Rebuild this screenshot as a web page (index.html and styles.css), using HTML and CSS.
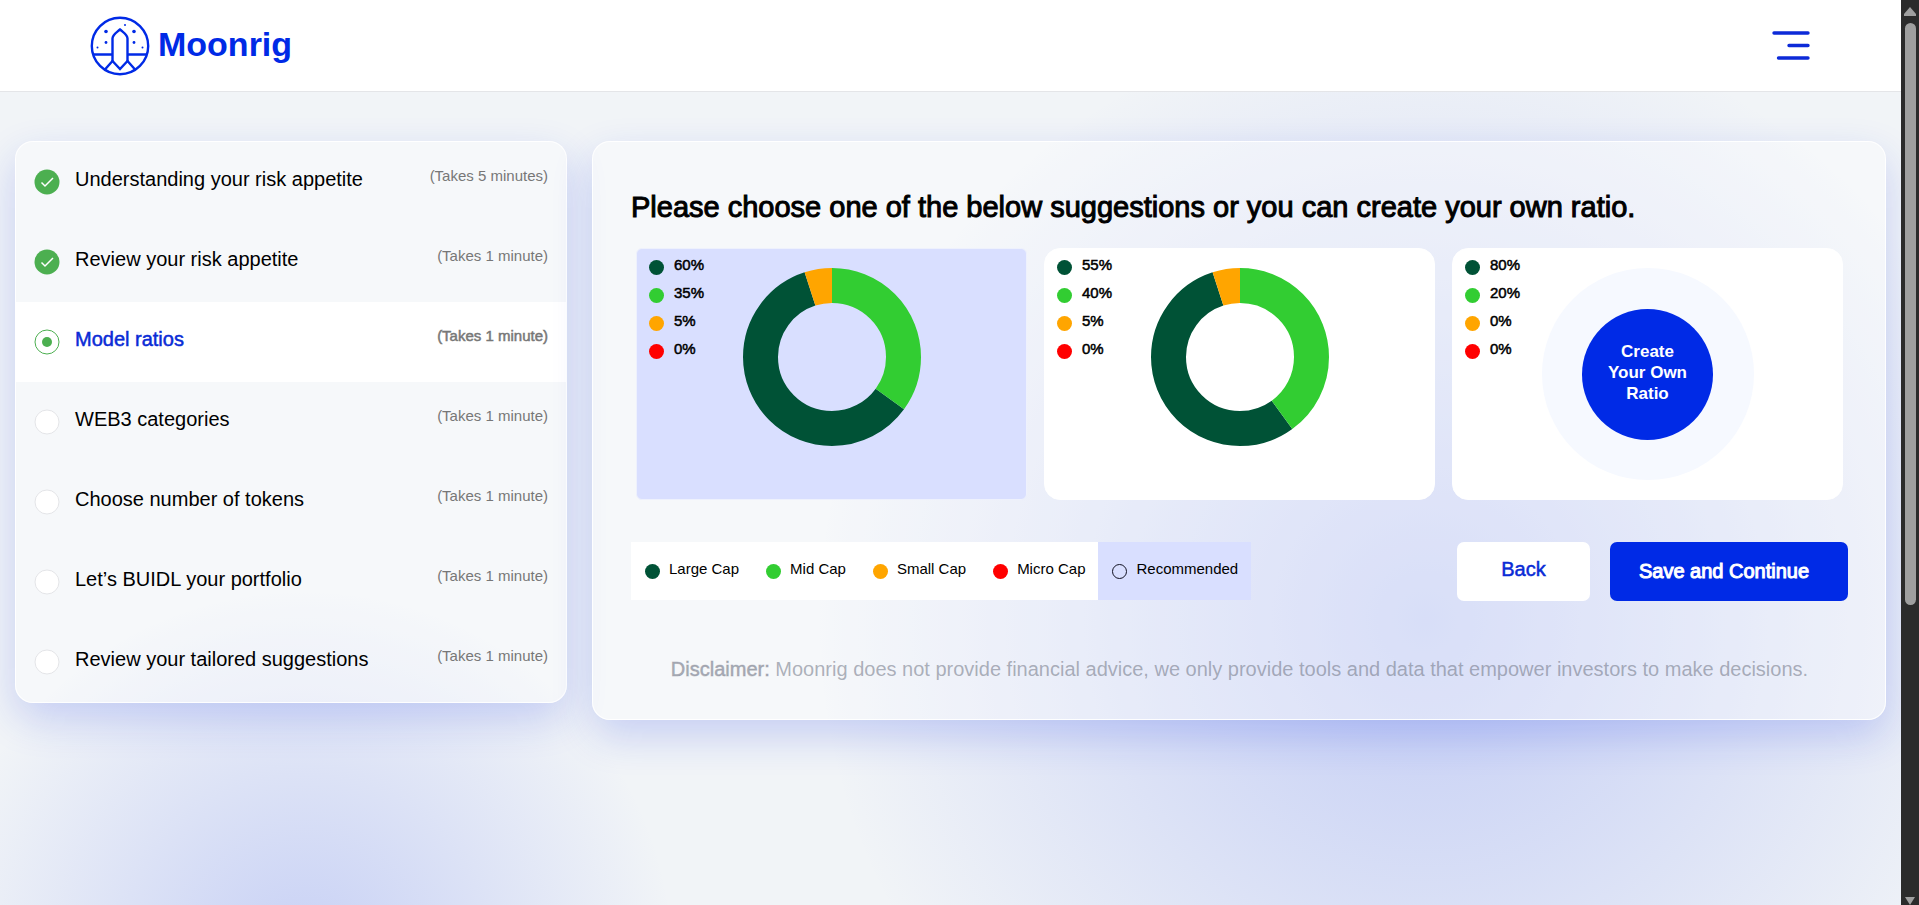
FILE: index.html
```
<!DOCTYPE html>
<html lang="en">
  <head>
    <meta charset="utf-8" />
    <title>Moonrig</title>
    <link rel="stylesheet" href="styles.css" />
  </head>
  <body>
    <div class="page">
      <header class="header">
        <a class="logo" href="#">
          <svg width="60" height="60" viewBox="0 0 60 60" fill="none" stroke="#002ae6" stroke-width="2.4">
            <circle cx="30" cy="30" r="28.2" />
            <path d="M3 38.500H22.500M37.500 38.500H57" />
            <path d="M22.500 46V22.500C22.500 19 26 17 30 13.500C34 17 37.500 19 37.500 22.500V46" />
            <path d="M14.500 54L22.500 45L30 53L37.500 45L45.500 54" />
            <g fill="#002ae6" stroke="none">
              <circle cx="16" cy="15.500" r="1.800" />
              <circle cx="44" cy="15.500" r="1.800" />
              <circle cx="35" cy="9" r="1" />
              <circle cx="16" cy="26.500" r="1.400" />
              <circle cx="44" cy="26.500" r="1.400" />
              <circle cx="7.500" cy="31.500" r="1" />
              <circle cx="52.500" cy="31.500" r="1" />
            </g>
          </svg>
          <span>Moonrig</span>
        </a>
        <button class="menu" aria-label="Menu">
          <svg width="38" height="30" viewBox="0 0 38 30" stroke="#0c2ad8" stroke-width="3.4" stroke-linecap="round">
            <path d="M2 2H36M17 14.500H36M6.500 27H36" />
          </svg>
        </button>
      </header>

      <main class="content">
        <ul class="panel steps">
          <li class="step">
            <svg class="mark" viewBox="0 0 26 26"><circle cx="13" cy="13" r="12.500" fill="#4caf50" /><path d="M7.500 13.500L11 17L19 9" fill="none" stroke="#fff" stroke-width="1.500" /></svg>
            <a href="#">Understanding your risk appetite</a>
            <span class="time">(Takes 5 minutes)</span>
          </li>
          <li class="step">
            <svg class="mark" viewBox="0 0 26 26"><circle cx="13" cy="13" r="12.500" fill="#4caf50" /><path d="M7.500 13.500L11 17L19 9" fill="none" stroke="#fff" stroke-width="1.500" /></svg>
            <a href="#">Review your risk appetite</a>
            <span class="time">(Takes 1 minute)</span>
          </li>
          <li class="step active">
            <svg class="mark" viewBox="0 0 26 26"><circle cx="13" cy="13" r="12" fill="#fff" stroke="#4caf50" /><circle cx="13" cy="13" r="5" fill="#4caf50" /></svg>
            <a href="#">Model ratios</a>
            <span class="time">(Takes 1 minute)</span>
          </li>
          <li class="step">
            <svg class="mark" viewBox="0 0 26 26"><circle cx="13" cy="13" r="12" fill="#fff" stroke="#e4e5e8" /></svg>
            <a href="#">WEB3 categories</a>
            <span class="time">(Takes 1 minute)</span>
          </li>
          <li class="step">
            <svg class="mark" viewBox="0 0 26 26"><circle cx="13" cy="13" r="12" fill="#fff" stroke="#e4e5e8" /></svg>
            <a href="#">Choose number of tokens</a>
            <span class="time">(Takes 1 minute)</span>
          </li>
          <li class="step">
            <svg class="mark" viewBox="0 0 26 26"><circle cx="13" cy="13" r="12" fill="#fff" stroke="#e4e5e8" /></svg>
            <a href="#">Let’s BUIDL your portfolio</a>
            <span class="time">(Takes 1 minute)</span>
          </li>
          <li class="step">
            <svg class="mark" viewBox="0 0 26 26"><circle cx="13" cy="13" r="12" fill="#fff" stroke="#e4e5e8" /></svg>
            <a href="#">Review your tailored suggestions</a>
            <span class="time">(Takes 1 minute)</span>
          </li>
        </ul>

        <section class="panel ratios">
          <h1>Please choose one of the below suggestions or you can create your own ratio.</h1>

          <div class="cards">
            <div class="card selected">
              <ul class="values">
                <li><i class="dot large"></i>60%</li>
                <li><i class="dot mid"></i>35%</li>
                <li><i class="dot small"></i>5%</li>
                <li><i class="dot micro"></i>0%</li>
              </ul>
              <svg class="donut" viewBox="0 0 180 180" fill="none" stroke-width="35">
                <circle cx="90" cy="90" r="71.500" pathLength="100" stroke="#005236" stroke-dasharray="60 40" stroke-dashoffset="-35" />
                <circle cx="90" cy="90" r="71.500" pathLength="100" stroke="#32cd32" stroke-dasharray="35 65" />
                <circle cx="90" cy="90" r="71.500" pathLength="100" stroke="#ffa500" stroke-dasharray="5 95" stroke-dashoffset="5" />
              </svg>
            </div>
            <div class="card">
              <ul class="values">
                <li><i class="dot large"></i>55%</li>
                <li><i class="dot mid"></i>40%</li>
                <li><i class="dot small"></i>5%</li>
                <li><i class="dot micro"></i>0%</li>
              </ul>
              <svg class="donut" viewBox="0 0 180 180" fill="none" stroke-width="35">
                <circle cx="90" cy="90" r="71.500" pathLength="100" stroke="#005236" stroke-dasharray="55 45" stroke-dashoffset="-40" />
                <circle cx="90" cy="90" r="71.500" pathLength="100" stroke="#32cd32" stroke-dasharray="40 60" />
                <circle cx="90" cy="90" r="71.500" pathLength="100" stroke="#ffa500" stroke-dasharray="5 95" stroke-dashoffset="5" />
              </svg>
            </div>
            <div class="card">
              <ul class="values">
                <li><i class="dot large"></i>80%</li>
                <li><i class="dot mid"></i>20%</li>
                <li><i class="dot small"></i>0%</li>
                <li><i class="dot micro"></i>0%</li>
              </ul>
              <div class="halo">
                <button class="create">Create<br />Your Own<br />Ratio</button>
              </div>
            </div>
          </div>

          <div class="bottom">
            <ul class="legend">
              <li><i class="dot large"></i>Large Cap</li>
              <li><i class="dot mid"></i>Mid Cap</li>
              <li><i class="dot small"></i>Small Cap</li>
              <li><i class="dot micro"></i>Micro Cap</li>
              <li class="recommended"><i class="dot ring"></i>Recommended</li>
            </ul>
            <div class="actions">
              <button class="btn back">Back</button>
              <button class="btn save">Save and Continue</button>
            </div>
          </div>

          <p class="disclaimer">
            <b>Disclaimer:</b> Moonrig does not provide financial advice, we only provide tools and data that empower investors to make decisions.
          </p>
        </section>
      </main>
    </div>

    <div class="scrollbar">
      <svg width="12" height="9" viewBox="0 0 12 9"><path d="M6 0L12 7V9H0V7Z" fill="#9f9f9f" /></svg>
      <div class="thumb"></div>
      <svg width="12" height="8" viewBox="0 0 12 8"><path d="M1 0H11L6 8Z" fill="#9f9f9f" /></svg>
    </div>
  </body>
</html>
```
FILE: styles.css
```
* {
  box-sizing: border-box;
}

body {
  display: flex;
  height: 100vh;
  margin: 0;
  overflow: hidden;
  font-family: "Liberation Sans", Arial, sans-serif;
  color: #000;
}

ul {
  list-style: none;
  margin: 0;
  padding: 0;
}

a {
  color: inherit;
  text-decoration: none;
}

button {
  font-family: inherit;
  border: 0;
  cursor: pointer;
}

.page {
  flex: 1;
  background:
    radial-gradient(circle at 75% 620px, rgba(90, 115, 240, 0.3), rgba(90, 115, 240, 0) 610px),
    radial-gradient(circle at 16% 960px, rgba(90, 115, 240, 0.28), rgba(90, 115, 240, 0) 370px),
    #f1f4f7;
}

.header {
  display: flex;
  justify-content: space-between;
  align-items: center;
  height: 92px;
  padding: 0 91px 0 90px;
  background: #fff;
  border-bottom: 1px solid #e4e5e8;
}

.logo {
  display: flex;
  align-items: center;
  gap: 8px;
  color: #002ae6;
  font-size: 34px;
  font-weight: bold;
}

.logo span {
  padding-bottom: 3px;
}

.menu {
  display: flex;
  padding: 0;
  background: none;
}

.content {
  display: grid;
  grid-template-columns: 552px 1fr;
  align-items: start;
  gap: 25px;
  padding: 49px 15px;
}

.panel {
  border: 1px solid rgba(255, 255, 255, 0.9);
  border-radius: 18px;
  background: rgba(255, 255, 255, 0.35);
  box-shadow: 0 16px 40px rgba(31, 60, 230, 0.2);
}

.step {
  display: flex;
  align-items: flex-start;
  height: 80px;
  padding: 25px 18px 0 18px;
  font-size: 20px;
  line-height: 24px;
}

.step a {
  margin-left: 15px;
}

.step.active {
  background: #fff;
}

.step.active a {
  color: #0a2bd6;
  -webkit-text-stroke: 0.5px #0a2bd6;
}

.step.active .time {
  -webkit-text-stroke: 0.5px #777;
}

.mark {
  width: 26px;
  height: 26px;
  margin-top: 2px;
}

.time {
  margin-left: auto;
  color: #777;
  font-size: 15px;
  line-height: 18px;
}

.ratios {
  padding: 47px 37px 38px 38px;
}

.ratios h1 {
  margin: 0 0 23px;
  font-size: 29px;
  line-height: 36px;
  font-weight: normal;
  -webkit-text-stroke: 1px #000;
}

.cards {
  display: grid;
  grid-template-columns: repeat(3, 1fr);
  gap: 17px;
  padding: 0 5px;
}

.card {
  display: grid;
  grid-template-columns: 1fr auto 1fr;
  align-items: start;
  height: 252px;
  border: 1px solid #fff;
  border-radius: 16px;
  background: #fff;
}

.card.selected {
  border-color: #eef1fd;
  border-radius: 6px;
  background: #d9dfff;
}

.values {
  padding: 2px 0 0 12px;
  font-size: 15px;
  line-height: 28px;
  -webkit-text-stroke: 0.5px #000;
}

.values li {
  display: flex;
  align-items: center;
  gap: 10px;
}

.dot {
  width: 15px;
  height: 15px;
  margin-top: 4px;
  border-radius: 50%;
}

.large {
  background: #005236;
}

.mid {
  background: #32cd32;
}

.small {
  background: #ffa500;
}

.micro {
  background: #f00;
}

.ring {
  border: 1px solid #112;
}

.donut {
  width: 180px;
  height: 180px;
  margin-top: 18px;
  transform: rotate(-90deg);
}

.halo {
  display: flex;
  justify-content: center;
  align-items: center;
  width: 212px;
  height: 212px;
  margin-top: 19px;
  border-radius: 50%;
  background: #f6f9ff;
}

.create {
  width: 131px;
  height: 131px;
  padding: 0 0 3px;
  border-radius: 50%;
  background: #002ae6;
  color: #fff;
  font-size: 17px;
  line-height: 21px;
  font-weight: bold;
}

.bottom {
  display: flex;
  justify-content: space-between;
  margin-top: 42px;
}

.legend {
  display: flex;
  height: 58px;
  background: #fff;
  font-size: 15px;
  line-height: 18px;
}

.legend li {
  display: flex;
  align-items: center;
  gap: 9px;
  padding: 0 13px 4px 14px;
}

.legend .recommended {
  background: #d9dfff;
}

.actions {
  display: flex;
  gap: 20px;
}

.btn {
  height: 59px;
  padding: 0;
  border-radius: 7px;
  font-size: 20px;
}

.back {
  width: 133px;
  padding-bottom: 4px;
  background: #fff;
  color: #0a2bd6;
  -webkit-text-stroke: 0.5px #0a2bd6;
}

.save {
  width: 238px;
  padding-right: 10px;
  background: #002ae6;
  color: #fff;
  -webkit-text-stroke: 1px #fff;
}

.disclaimer {
  margin: 56px 0 0;
  color: rgba(110, 115, 130, 0.55);
  font-size: 20px;
  line-height: 24px;
  text-align: center;
}

.disclaimer b {
  font-weight: normal;
  -webkit-text-stroke: 1px rgba(110, 115, 130, 0.3);
}

.scrollbar {
  display: flex;
  flex-direction: column;
  align-items: center;
  width: 18px;
  padding: 7px 0 0;
  background: #2b2b2b;
}

.thumb {
  width: 11px;
  height: 582px;
  margin: 7px 0 auto;
  border-radius: 6px;
  background: #9f9f9f;
}
```
